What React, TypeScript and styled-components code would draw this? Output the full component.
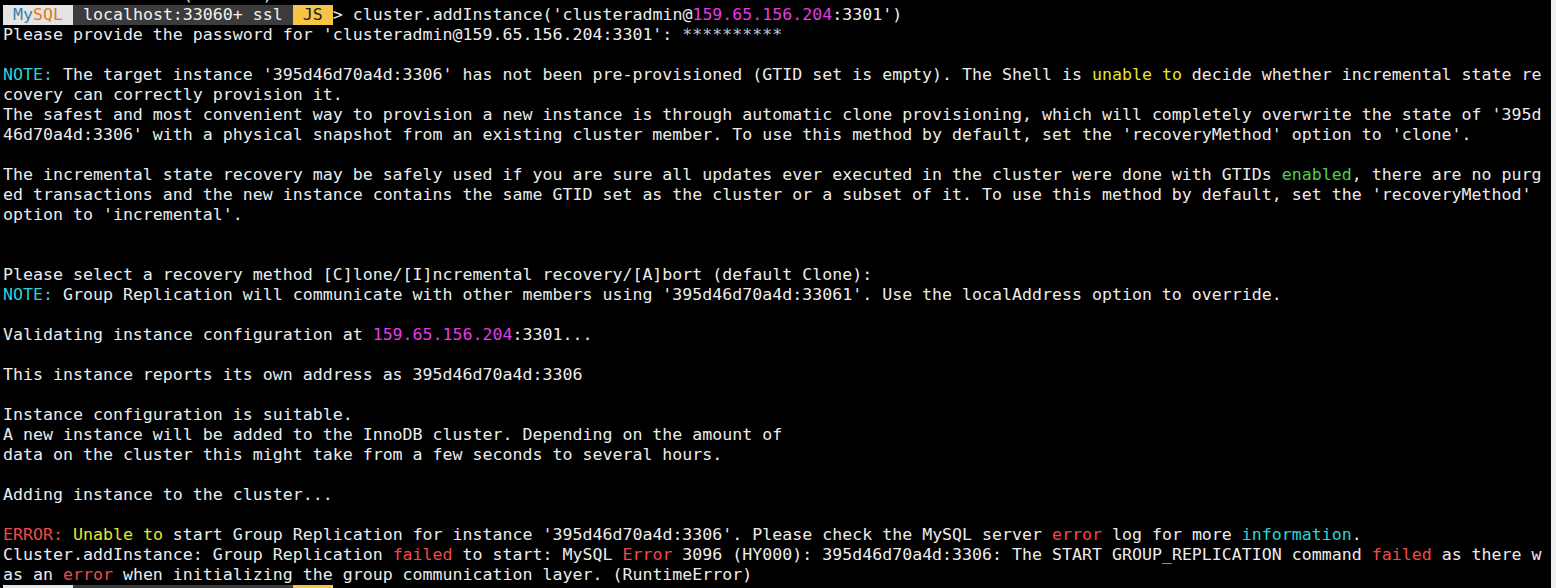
import React from "react";
import styled, { createGlobalStyle } from "styled-components";

const GlobalStyle = createGlobalStyle`
  html, body {
    margin: 0;
    padding: 0;
    background: #f0f0f0;
    overflow: hidden;
  }
`;

type Tone = "text" | "cyan" | "yellow" | "magenta" | "green" | "red" | "dim";

const toneColor: Record<Tone, string> = {
  text: "#ececec",
  cyan: "#2ad2dc",
  yellow: "#e6e62e",
  magenta: "#e63ae6",
  green: "#4ad24a",
  red: "#f04a4a",
  dim: "#c4c4c4",
};

const Frame = styled.div`
  display: flex;
  width: 1556px;
  height: 588px;
  overflow: hidden;
`;

const Terminal = styled.div`
  width: 1551px;
  height: 588px;
  background: #000;
  overflow: hidden;
  font-family: "DejaVu Sans Mono", "Liberation Mono", monospace;
  font-size: 16.6px;
  line-height: 20px;
`;

const Scroller = styled.div`
  margin-top: -15px;
  padding-left: 3px;
`;

const Gutter = styled.div`
  flex: 1;
  background: #efefef;
`;

const Line = styled.div`
  height: 20px;
  white-space: pre;
  color: ${toneColor.text};
  display: flex;
`;

const Seg = styled.span<{ $tone: Tone }>`
  color: ${(p) => toneColor[p.$tone]};
`;

const Tag = styled.span<{ $kind: "mysql" | "host" | "js" }>`
  display: inline-block;
  height: 20px;
  background: ${(p) =>
    p.$kind === "mysql" ? "#e4e4e4" : p.$kind === "host" ? "#3c3c3c" : "#f6c548"};
  color: ${(p) => (p.$kind === "host" ? "#f2f2f2" : "#1e1e1e")};
`;

const My = styled.span`
  color: #3a7fae;
`;
const Sql = styled.span`
  color: #e07a1c;
`;

type Segment = [Tone, string];

const Prompt: React.FC<{ children?: React.ReactNode }> = ({ children }) => (
  <Line>
    <Tag $kind="mysql">
      {" "}
      <My>My</My>
      <Sql>SQL</Sql>{" "}
    </Tag>
    <Tag $kind="host"> localhost:33060+ ssl </Tag>
    <Tag $kind="js"> JS </Tag>
    {children}
  </Line>
);

const lines: Segment[][] = [
  [["text", "Please provide the password for 'clusteradmin@159.65.156.204:3301': "], ["dim", "**********"]],
  [],
  [
    ["cyan", "NOTE:"],
    ["text", " The target instance '395d46d70a4d:3306' has not been pre-provisioned (GTID set is empty). The Shell is "],
    ["yellow", "unable to"],
    ["text", " decide whether incremental state re"],
  ],
  [["text", "covery can correctly provision it."]],
  [["text", "The safest and most convenient way to provision a new instance is through automatic clone provisioning, which will completely overwrite the state of '395d"]],
  [["text", "46d70a4d:3306' with a physical snapshot from an existing cluster member. To use this method by default, set the 'recoveryMethod' option to 'clone'."]],
  [],
  [
    ["text", "The incremental state recovery may be safely used if you are sure all updates ever executed in the cluster were done with GTIDs "],
    ["green", "enabled"],
    ["text", ", there are no purg"],
  ],
  [["text", "ed transactions and the new instance contains the same GTID set as the cluster or a subset of it. To use this method by default, set the 'recoveryMethod'"]],
  [["text", "option to 'incremental'."]],
  [],
  [],
  [["text", "Please select a recovery method [C]lone/[I]ncremental recovery/[A]bort (default Clone): "]],
  [
    ["cyan", "NOTE:"],
    ["text", " Group Replication will communicate with other members using '395d46d70a4d:33061'. Use the localAddress option to override."],
  ],
  [],
  [["text", "Validating instance configuration at "], ["magenta", "159.65.156.204"], ["text", ":3301..."]],
  [],
  [["text", "This instance reports its own address as 395d46d70a4d:3306"]],
  [],
  [["text", "Instance configuration is suitable."]],
  [["text", "A new instance will be added to the InnoDB cluster. Depending on the amount of"]],
  [["text", "data on the cluster this might take from a few seconds to several hours."]],
  [],
  [["text", "Adding instance to the cluster..."]],
  [],
  [
    ["red", "ERROR:"],
    ["text", " "],
    ["yellow", "Unable to"],
    ["text", " start Group Replication for instance '395d46d70a4d:3306'. Please check the MySQL server "],
    ["red", "error"],
    ["text", " log for more "],
    ["cyan", "information"],
    ["text", "."],
  ],
  [
    ["text", "Cluster.addInstance: Group Replication "],
    ["red", "failed"],
    ["text", " to start: MySQL "],
    ["red", "Error"],
    ["text", " 3096 (HY000): 395d46d70a4d:3306: The START GROUP_REPLICATION command "],
    ["red", "failed"],
    ["text", " as there w"],
  ],
  [
    ["text", "as an "],
    ["red", "error"],
    ["text", " when initializing the group communication layer. (RuntimeError)"],
  ],
];

export default function App() {
  return (
    <>
      <GlobalStyle />
      <Frame>
        <Terminal>
          <Scroller>
            <Line>{"                  (       )"}</Line>
            <Prompt>
              <Seg $tone="text">{"> cluster.addInstance('clusteradmin@"}</Seg>
              <Seg $tone="magenta">159.65.156.204</Seg>
              <Seg $tone="text">{":3301')"}</Seg>
            </Prompt>
            {lines.map((segs, i) => (
              <Line key={i}>
                {segs.map(([tone, text], j) => (
                  <Seg key={j} $tone={tone}>
                    {text}
                  </Seg>
                ))}
              </Line>
            ))}
            <Prompt />
          </Scroller>
        </Terminal>
        <Gutter />
      </Frame>
    </>
  );
}
